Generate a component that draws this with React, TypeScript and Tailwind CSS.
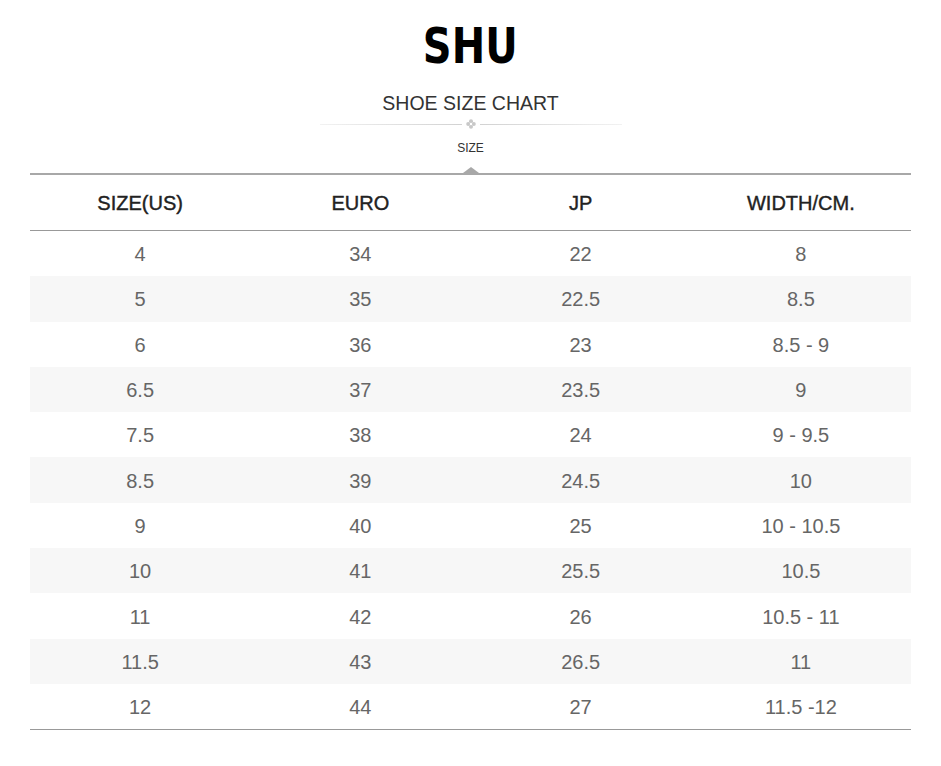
const rows: [string, string, string, string][] = [
  ["4", "34", "22", "8"],
  ["5", "35", "22.5", "8.5"],
  ["6", "36", "23", "8.5 - 9"],
  ["6.5", "37", "23.5", "9"],
  ["7.5", "38", "24", "9 - 9.5"],
  ["8.5", "39", "24.5", "10"],
  ["9", "40", "25", "10 - 10.5"],
  ["10", "41", "25.5", "10.5"],
  ["11", "42", "26", "10.5 - 11"],
  ["11.5", "43", "26.5", "11"],
  ["12", "44", "27", "11.5 -12"],
];

const headers = ["SIZE(US)", "EURO", "JP", "WIDTH/CM."];

function Ornament() {
  return (
    <svg width="10" height="10" viewBox="0 0 10 10" className="shrink-0">
      <circle cx="5" cy="2.2" r="2" fill="#c8c8c8" />
      <circle cx="5" cy="7.8" r="2" fill="#c8c8c8" />
      <circle cx="2.2" cy="5" r="2" fill="#c8c8c8" />
      <circle cx="7.8" cy="5" r="2" fill="#c8c8c8" />
      <circle cx="5" cy="5" r="1.2" fill="#fff" />
    </svg>
  );
}

export default function App() {
  return (
    <div
      className="w-[941px] h-[766px] bg-white flex flex-col items-center"
      style={{ fontFamily: '"Liberation Sans", Arial, sans-serif' }}
    >
      <div
        className="mt-[20px] h-[52px] flex items-center text-[50px] font-bold leading-none text-black scale-x-[0.8]"
        style={{ fontFamily: '"DejaVu Sans", sans-serif' }}
      >
        SHU
      </div>

      <div className="mt-[20px] text-[19.5px] leading-[22px] text-[#333]">
        SHOE SIZE CHART
      </div>

      <div className="mt-[5px] w-[302px] flex items-center gap-[4px]">
        <div className="flex-1 h-px bg-gradient-to-r from-[#f2f2f2] to-[#d2d2d2]" />
        <Ornament />
        <div className="flex-1 h-px bg-gradient-to-l from-[#f2f2f2] to-[#d2d2d2]" />
      </div>

      <div className="mt-[12px] text-[12px] leading-[14px] text-[#333]">SIZE</div>

      <div className="mt-[12px] w-0 h-0 border-x-[8px] border-x-transparent border-b-[6px] border-b-[#a8a8a8]" />

      <div className="w-[881px] border-t-2 border-[#a8a8a8]">
        <div className="grid grid-cols-4 h-[56px] items-center border-b border-[#999]">
          {headers.map((h) => (
            <div
              key={h}
              className="text-center text-[20px] text-[#222] [-webkit-text-stroke:0.4px_#222]"
            >
              {h}
            </div>
          ))}
        </div>
        <div className="border-b border-[#999]">
          {rows.map((r, i) => (
            <div
              key={i}
              className={`grid grid-cols-4 h-[45.3px] items-center ${i % 2 === 1 ? "bg-[#f7f7f7]" : "bg-white"}`}
            >
              {r.map((c, j) => (
                <div key={j} className="text-center text-[20px] leading-[24px] pt-[1px] text-[#666]">
                  {c}
                </div>
              ))}
            </div>
          ))}
        </div>
      </div>
    </div>
  );
}
